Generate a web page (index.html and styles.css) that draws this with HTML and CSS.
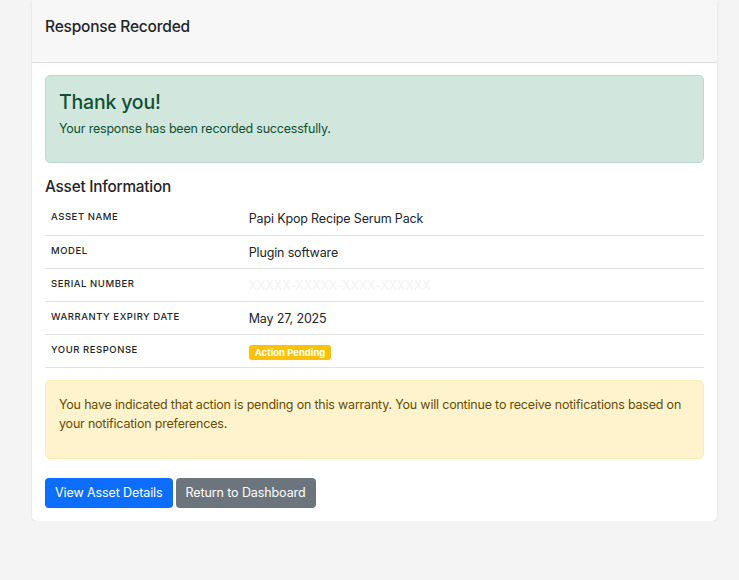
FILE: index.html
```html
<!DOCTYPE html>
<html lang="en">
<head>
<meta charset="utf-8">
<title>Response Recorded</title>
<link rel="stylesheet" href="styles.css">
</head>
<body>
<div class="card">
  <div class="card-header">
    <h5 class="card-title">Response Recorded</h5>
  </div>
  <div class="card-body">
    <div class="alert alert-success">
      <h4 class="alert-heading">Thank you!</h4>
      <p>Your response has been recorded successfully.</p>
    </div>
    <h5 class="section-title">Asset Information</h5>
    <table class="info-table">
      <tr><th>Asset Name</th><td>Papi Kpop Recipe Serum Pack</td></tr>
      <tr><th>Model</th><td>Plugin software</td></tr>
      <tr><th>Serial Number</th><td><span class="redacted">XXXXX-XXXXX-XXXX-XXXXXX</span></td></tr>
      <tr><th>Warranty Expiry Date</th><td>May 27, 2025</td></tr>
      <tr><th>Your Response</th><td><span class="badge">Action Pending</span></td></tr>
    </table>
    <div class="alert alert-warning">
      <p>You have indicated that action is pending on this warranty. You will continue to receive notifications based on your notification preferences.</p>
    </div>
    <div class="actions">
      <a class="btn btn-primary">View Asset Details</a>
      <a class="btn btn-secondary">Return to Dashboard</a>
    </div>
  </div>
</div>
</body>
</html>
```
FILE: styles.css
```css
html, body {
  margin: 0;
  padding: 0;
  background: #f4f4f4;
  font-family: Inter, "Helvetica Neue", "Liberation Sans", Arial, sans-serif;
  color: #212529;
}
.card {
  margin-left: 32px;
  width: 685px;
  background: #fff;
  border-radius: 0 0 5px 5px;
  box-shadow: 0 1px 3px rgba(0,0,0,0.10);
  overflow: hidden;
}
.card-header {
  background: #f7f7f7;
  border-bottom: 1px solid #dcdcdc;
  height: 63px;
  box-sizing: border-box;
  padding: 16px 13px 0;
}
.card-title {
  margin: 0;
  font-size: 15.5px;
  font-weight: 500;
  line-height: 21px;
  letter-spacing: -0.2px;
}
.card-body {
  padding: 12px 13px 13px;
}
.alert {
  border-radius: 5px;
  border: 1px solid transparent;
  padding: 13px 13px;
}
.alert p { margin: 0; }
.alert-success {
  background: #d1e7dd;
  border-color: #badbcc;
  color: #0f5132;
  height: 88px;
  box-sizing: border-box;
  padding-top: 15px;
}
.alert-heading {
  margin: 0 0 6px;
  font-size: 19.5px;
  font-weight: 500;
  line-height: 23px;
  letter-spacing: -0.2px;
}
.alert-success p {
  font-size: 12.5px;
  line-height: 18px;
  letter-spacing: -0.2px;
}
.section-title {
  margin: 14px 0 5px;
  font-size: 15.3px;
  font-weight: 500;
  line-height: 20px;
  letter-spacing: -0.2px;
}
.info-table {
  width: 100%;
  border-collapse: collapse;
}
.info-table tr {
  border-bottom: 1px solid #dee2e6;
  height: 33px;
}
.info-table th {
  width: 30%;
  text-align: left;
  vertical-align: top;
  padding: 9px 6px 0;
  font-size: 9.5px;
  font-weight: 500;
  letter-spacing: 0.55px;
  text-transform: uppercase;
  color: #212529;
  line-height: 12px;
}
.info-table td {
  vertical-align: top;
  padding: 9px 6px 0;
  font-size: 12.5px;
  letter-spacing: -0.15px;
  line-height: 16px;
  height: 24px;
  box-sizing: border-box;
}
.redacted {
  color: #f3f3f5;
}
.badge {
  display: inline-block;
  background: #ffc107;
  color: #fff;
  font-size: 9.5px;
  font-weight: 700;
  letter-spacing: 0;
  line-height: 15px;
  padding: 0 6px;
  border-radius: 3px;
  margin-top: 1px;
}
.alert-warning {
  margin-top: 12px;
  background: #fff3cd;
  border-color: #ffecb5;
  color: #664d03;
  height: 79px;
  box-sizing: border-box;
  padding: 14px 13px;
}
.alert-warning p {
  font-size: 12.5px;
  line-height: 19px;
  letter-spacing: -0.2px;
}
.actions {
  margin-top: 19px;
  display: flex;
  gap: 3px;
}
.btn {
  display: inline-block;
  color: #fff;
  font-size: 12.5px;
  letter-spacing: -0.1px;
  line-height: 30px;
  height: 30px;
  padding: 0 10px;
  border-radius: 4px;
}
.btn-primary { background: #0d6efd; }
.btn-secondary { background: #6c757d; }
```
